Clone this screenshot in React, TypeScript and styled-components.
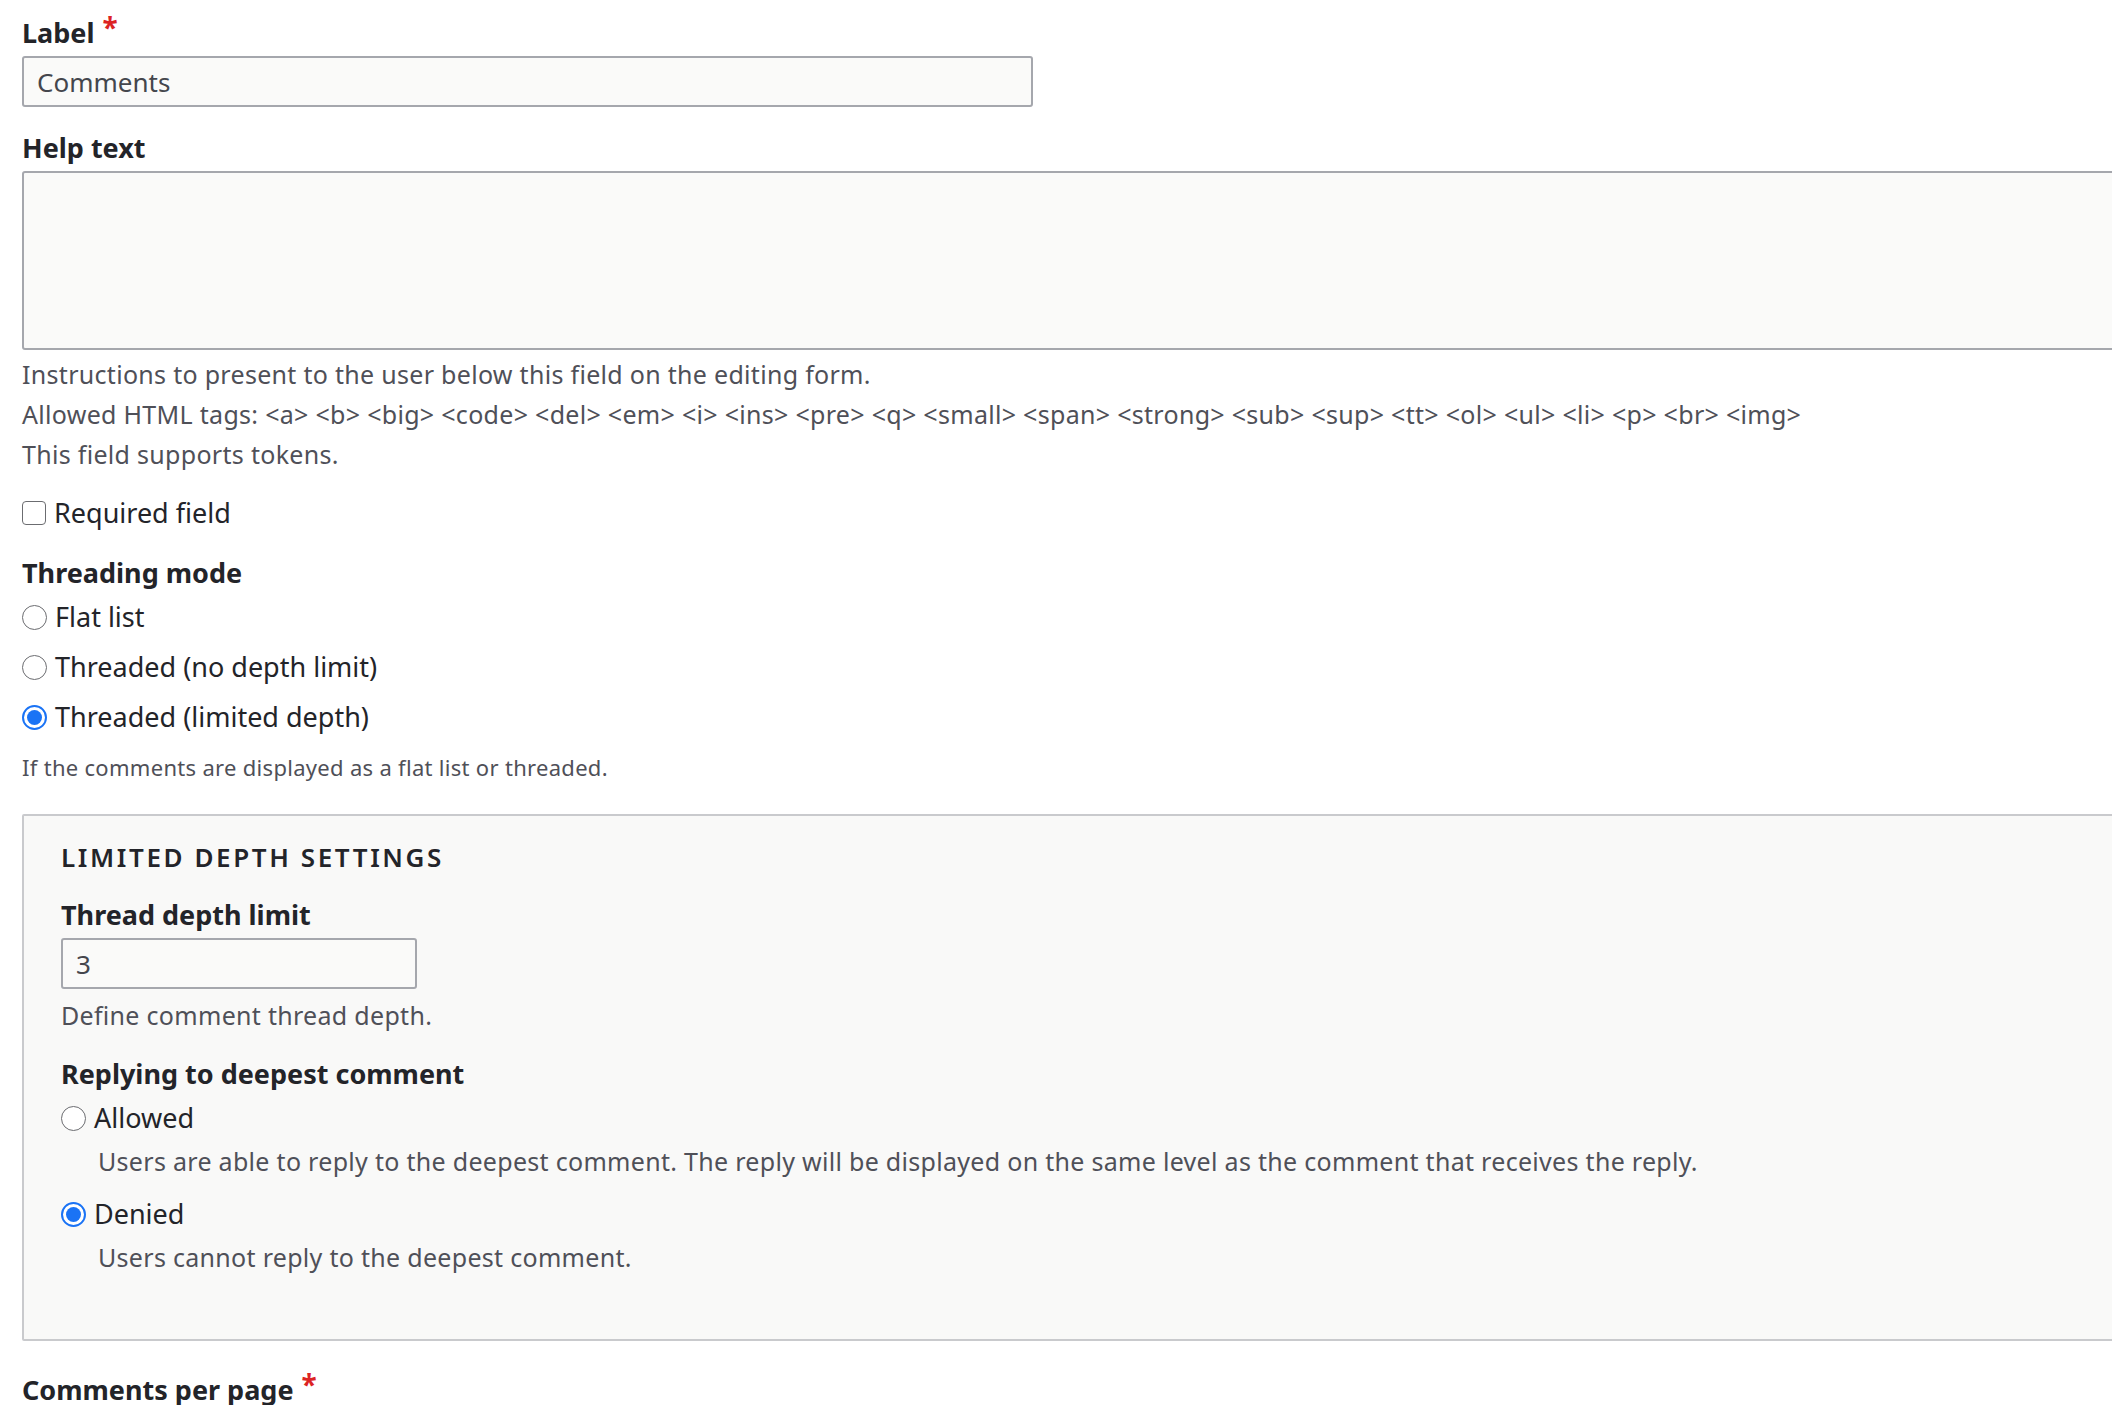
import React from "react";
import styled, { createGlobalStyle } from "styled-components";

const Global = createGlobalStyle`
  html, body { margin: 0; padding: 0; background: #fff; overflow: hidden; }
  body { font-family: "Noto Sans", "Open Sans", sans-serif; color: #232429; }
`;

const Page = styled.div`
  padding: 18px 0 0 22px;
  width: 2300px;
  display: flex;
  flex-direction: column;
`;

const FieldLabel = styled.label<{ $top?: number }>`
  display: block;
  font-size: 27px;
  font-weight: 700;
  line-height: 30px;
  margin-top: ${({ $top }) => $top ?? 0}px;
  color: #232429;
`;

const Star = styled.span`
  color: #dc2323;
  margin-left: 8px;
  font-size: 28px;
  vertical-align: top;
  position: relative;
  top: -6px;
`;

const TextInput = styled.input<{ $width: number }>`
  box-sizing: border-box;
  width: ${({ $width }) => $width}px;
  height: 51px;
  margin-top: 8px;
  padding: 0 13px;
  font: 400 26px "Noto Sans", sans-serif;
  color: #44464d;
  background: #fafaf9;
  border: 2px solid #a5a7ad;
  border-radius: 3px;
  outline: none;
`;

const TextArea = styled.textarea`
  box-sizing: border-box;
  width: 2200px;
  height: 179px;
  margin-top: 8px;
  background: #fafaf9;
  border: 2px solid #a5a7ad;
  border-radius: 3px;
  resize: none;
`;

const Desc = styled.div<{ $small?: boolean; $top?: number; $indent?: number }>`
  font-size: ${({ $small }) => ($small ? 22 : 25)}px;
  line-height: ${({ $small }) => ($small ? 30 : 40)}px;
  letter-spacing: 0.3px;
  color: #4f5058;
  margin-top: ${({ $top }) => $top ?? 0}px;
  padding-left: ${({ $indent }) => $indent ?? 0}px;
  white-space: nowrap;
`;

const OptionRow = styled.label<{ $top?: number }>`
  display: flex;
  align-items: center;
  gap: 8px;
  font-size: 27px;
  line-height: 34px;
  color: #232429;
  margin-top: ${({ $top }) => $top ?? 0}px;
`;

const Radio = styled.span<{ $on?: boolean }>`
  box-sizing: border-box;
  width: 25px;
  height: 25px;
  border-radius: 50%;
  border: ${({ $on }) => ($on ? "2px solid #1a73f5" : "1.5px solid #6b6c70")};
  background: #fff;
  display: flex;
  align-items: center;
  justify-content: center;
  &::after {
    content: "";
    display: ${({ $on }) => ($on ? "block" : "none")};
    width: 15px;
    height: 15px;
    border-radius: 50%;
    background: #1a73f5;
  }
`;

const Check = styled.span`
  box-sizing: border-box;
  width: 24px;
  height: 24px;
  border: 1.5px solid #6b6c70;
  border-radius: 4px;
  background: #fff;
`;

const Fieldset = styled.div`
  box-sizing: border-box;
  width: 2200px;
  margin-top: 32px;
  padding: 24px 37px 62px;
  background: #f9f9f8;
  border: 2px solid #c9cacd;
  border-radius: 2px;
`;

const Legend = styled.div`
  font-size: 26px;
  font-weight: 600;
  letter-spacing: 2.6px;
  text-transform: uppercase;
  line-height: 34px;
  color: #232429;
`;

export default function App() {
  return (
    <Page>
      <Global />
      <FieldLabel>
        Label<Star>*</Star>
      </FieldLabel>
      <TextInput $width={1011} defaultValue="Comments" />

      <FieldLabel $top={26}>Help text</FieldLabel>
      <TextArea />
      <Desc $top={4}>Instructions to present to the user below this field on the editing form.</Desc>
      <Desc>
        Allowed HTML tags: &lt;a&gt; &lt;b&gt; &lt;big&gt; &lt;code&gt; &lt;del&gt; &lt;em&gt; &lt;i&gt; &lt;ins&gt;
        &lt;pre&gt; &lt;q&gt; &lt;small&gt; &lt;span&gt; &lt;strong&gt; &lt;sub&gt; &lt;sup&gt; &lt;tt&gt; &lt;ol&gt;
        &lt;ul&gt; &lt;li&gt; &lt;p&gt; &lt;br&gt; &lt;img&gt;
      </Desc>
      <Desc>This field supports tokens.</Desc>

      <OptionRow $top={22}>
        <Check />
        Required field
      </OptionRow>

      <FieldLabel $top={28}>Threading mode</FieldLabel>
      <OptionRow $top={12}>
        <Radio />
        Flat list
      </OptionRow>
      <OptionRow $top={16}>
        <Radio />
        Threaded (no depth limit)
      </OptionRow>
      <OptionRow $top={16}>
        <Radio $on />
        Threaded (limited depth)
      </OptionRow>
      <Desc $small $top={18}>If the comments are displayed as a flat list or threaded.</Desc>

      <Fieldset>
        <Legend>Limited depth settings</Legend>
        <FieldLabel $top={26}>Thread depth limit</FieldLabel>
        <TextInput $width={356} defaultValue="3" />
        <Desc $top={6}>Define comment thread depth.</Desc>
        <FieldLabel $top={24}>Replying to deepest comment</FieldLabel>
        <OptionRow $top={12}>
          <Radio />
          Allowed
        </OptionRow>
        <Desc $top={6} $indent={37}>
          Users are able to reply to the deepest comment. The reply will be displayed on the same level as the
          comment that receives the reply.
        </Desc>
        <OptionRow $top={16}>
          <Radio $on />
          Denied
        </OptionRow>
        <Desc $top={6} $indent={37}>Users cannot reply to the deepest comment.</Desc>
      </Fieldset>

      <FieldLabel $top={34}>
        Comments per page<Star>*</Star>
      </FieldLabel>
    </Page>
  );
}
